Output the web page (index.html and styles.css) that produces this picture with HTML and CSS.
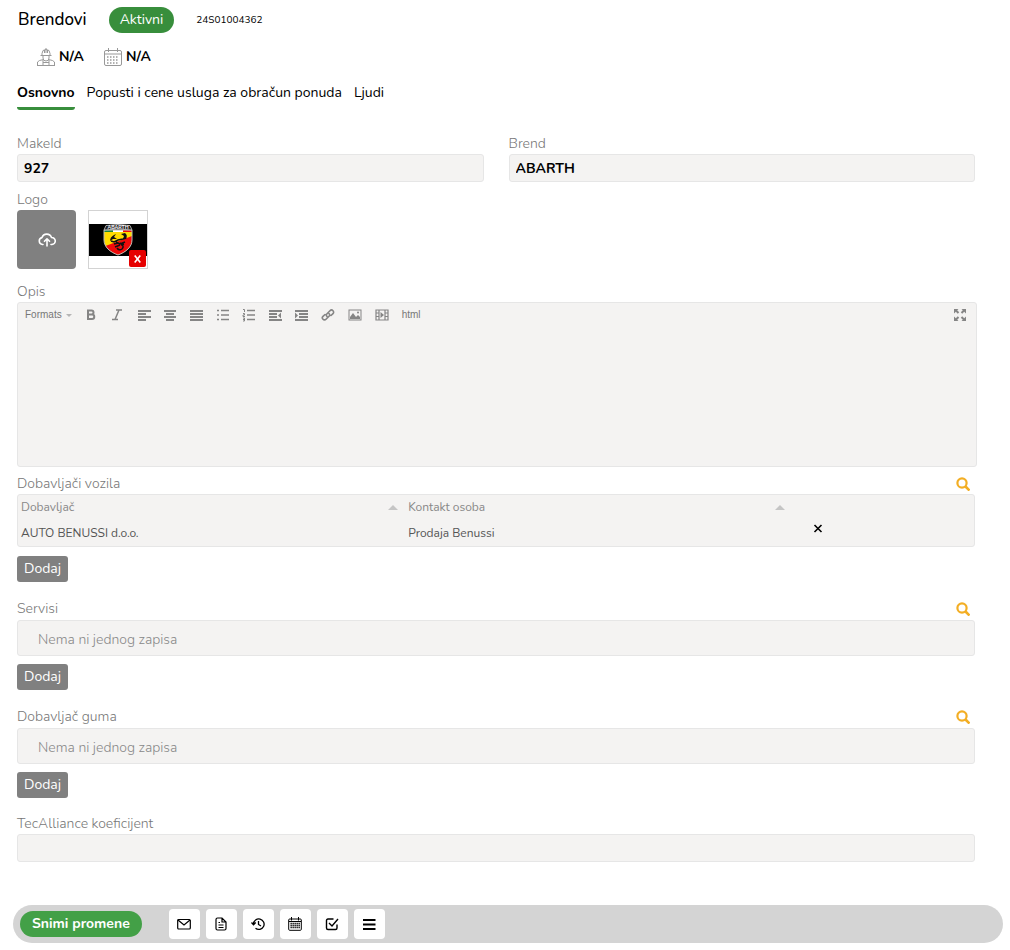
FILE: index.html
```html
<!DOCTYPE html>
<html lang="sr-Latn">
<head>
  <meta charset="utf-8">
  <title>Brendovi</title>
  <link rel="stylesheet" href="styles.css">
</head>
<body>
<header class="page-header">
  <div class="title-row">
    <h1>Brendovi</h1>
    <span class="status">Aktivni</span>
    <span class="code">24S01004362</span>
  </div>
  <div class="meta-row">
    <span class="meta-item">
      <svg width="18" height="18" viewBox="0 0 18 18" fill="none" stroke="#999">
        <path d="M3.500 7.500h11M5 7V5.500a4 4 0 0 1 8 0V7M9 0v5M7.500 2v3M10.500 2v3M6 8v2a3 3 0 0 0 6 0V8M.5 17v-3l2-1.500 4-1M17.500 17v-3l-2-1.500-4-1M0 17.500h18M6 12v5M12 12v5M6 14.500h6"/>
      </svg>
      N/A
    </span>
    <span class="meta-item">
      <svg width="18" height="18" viewBox="0 0 18 18" fill="none" stroke="#999">
        <rect x=".5" y="2.500" width="17" height="15" rx="1.500"/>
        <path d="M.5 6h17M4.500 0v4M13.500 0v4"/>
        <path d="M3 9h12M3 12h12M3 15h12" stroke-width="1.500" stroke-dasharray="1.500 1.500"/>
      </svg>
      N/A
    </span>
  </div>
  <nav class="tabs">
    <a href="#osnovno" class="active">Osnovno</a>
    <a href="#popusti">Popusti i cene usluga za obračun ponuda</a>
    <a href="#ljudi">Ljudi</a>
  </nav>
</header>

<main class="form" id="osnovno">
  <div class="columns">
    <div class="field">
      <label for="makeId">MakeId</label>
      <input type="text" id="makeId" value="927">
    </div>
    <div class="field">
      <label for="brend">Brend</label>
      <input type="text" id="brend" value="ABARTH">
    </div>
  </div>

  <div class="field logo-field">
    <span class="label">Logo</span>
    <div class="logos">
      <button class="upload" aria-label="Dodaj logo">
        <svg width="18" height="14" viewBox="0 0 18 14" fill="none" stroke="#fff" stroke-width="1.600" stroke-linecap="round" stroke-linejoin="round">
          <path d="M5 11.500H4.500A3.500 3.500 0 0 1 4 4.600 5 5 0 0 1 13.500 4.500a3.500 3.500 0 0 1 .5 7H13M9 13V6M6.500 8.300 9 5.800l2.500 2.500"/>
        </svg>
      </button>
      <div class="thumb">
        <svg class="thumb-image" viewBox="0 0 58 32">
          <rect width="58" height="32" fill="#000"/>
          <path d="M15 6h28v10c0 7-6 12-14 15-8-3-14-8-14-15z" fill="#ffdc00"/>
          <path d="M43 12v4c0 7-6 12-14 15-6-2-10-5-12.500-9z" fill="#f00a0a"/>
          <path d="M15 6h9v2h-9z" fill="#16833a"/>
          <path d="M24 6h10v2H24z" fill="#fff"/>
          <path d="M34 6h9v2h-9z" fill="#f00a0a"/>
          <path d="M15 6h28v10c0 7-6 12-14 15-8-3-14-8-14-15z" fill="none" stroke="#bbb"/>
          <path d="M15 6 17 1.500q12-2 24 0L43 6q-14-2-28 0z" fill="#222" stroke="#ccc" stroke-width=".8"/>
          <text x="29" y="5" class="badge-text">ABARTH</text>
          <path d="M21 17q0-4 4-6l2-1-2 3 3 2-4 0zM32 10l4-1q3 2 1 6l-3 0 1-3z" fill="#111"/>
          <path d="M22 17l3 1 4-2 5-1 3-1M27 18l4 2 5-2M25 20l4-1M26 23l5-2M35 20l-3 1M31 19q5 3 2 6-3 2-5-1" fill="none" stroke="#111" stroke-width="1.500"/>
        </svg>
        <button class="remove-logo" aria-label="Ukloni logo">
          <svg width="7" height="8" viewBox="0 0 7 8" stroke="#fff" stroke-width="1.600"><path d="M.7.5l5.600 7M6.300.5l-5.600 7"/></svg>
        </button>
      </div>
    </div>
  </div>

  <div class="field editor-field">
    <label for="opis">Opis</label>
    <div class="editor">
      <div class="toolbar">
        <button class="formats">Formats <span class="caret"></span></button>
        <button aria-label="Bold"><svg width="14" height="14" viewBox="0 0 14 14" fill="none" stroke="#858585" stroke-width="2"><path d="M4 2.500h3.500a2 2 0 0 1 0 4H4zM4 6.500h4a2.200 2.200 0 0 1 0 4.500H4z"/></svg></button>
        <button aria-label="Italic"><svg width="14" height="14" viewBox="0 0 14 14" fill="none" stroke="#858585" stroke-width="1.500"><path d="M6 2h6M2 11.500h6M9 2l-4 9.500"/></svg></button>
        <button class="group" aria-label="Align left"><svg width="14" height="14" viewBox="0 0 14 14" fill="none" stroke="#858585" stroke-width="2"><path d="M1 3h13M1 6h8M1 9h13M1 12h8"/></svg></button>
        <button aria-label="Align center"><svg width="14" height="14" viewBox="0 0 14 14" fill="none" stroke="#858585" stroke-width="2"><path d="M1 3h12M3 6h8M1 9h12M3 12h8"/></svg></button>
        <button aria-label="Justify"><svg width="14" height="14" viewBox="0 0 14 14" fill="none" stroke="#858585" stroke-width="2"><path d="M1 3h13M1 6h13M1 9h13M1 12h13"/></svg></button>
        <button class="group" aria-label="Bullet list"><svg width="14" height="14" viewBox="0 0 14 14" fill="none" stroke="#858585" stroke-width="1.600"><path d="M1 2.500h2M5 2.500h8M1 7h2M5 7h8M1 11.500h2M5 11.500h8"/></svg></button>
        <button aria-label="Numbered list"><svg width="14" height="14" viewBox="0 0 14 14" fill="none" stroke="#858585" stroke-width="1.600"><path d="M5 2.500h8M5 7h8M5 11.500h8"/><path d="M1 1.500h1.500V4M1 5.500h1.500v1.500H1V8.500h2M1 10h1.500v3H1M1 11.500h1.500" stroke-width="1"/></svg></button>
        <button aria-label="Outdent"><svg width="14" height="14" viewBox="0 0 14 14" fill="none" stroke="#858585" stroke-width="2"><path d="M1 3h13M1 6h8M1 9h8M1 12h13"/><path d="M13 4.500v6l-3-3z" fill="#858585" stroke="none"/></svg></button>
        <button aria-label="Indent"><svg width="14" height="14" viewBox="0 0 14 14" fill="none" stroke="#858585" stroke-width="2"><path d="M1 3h13M5 6h9M5 9h9M1 12h13"/><path d="M1 4.500v6l3-3z" fill="#858585" stroke="none"/></svg></button>
        <button class="group" aria-label="Link"><svg width="14" height="14" viewBox="0 0 14 14" fill="none" stroke="#858585" stroke-width="1.600" stroke-linecap="round"><path d="M6 8.500a2 2 0 0 1 0-2.800l3-3a2 2 0 0 1 3 3L10 7.500M8 5.500a2 2 0 0 1 0 2.800l-3 3a2 2 0 0 1-3-3L4 6.500"/></svg></button>
        <button class="group" aria-label="Image"><svg width="14" height="14" viewBox="0 0 14 14"><rect x="1" y="2" width="12" height="10" fill="none" stroke="#858585"/><path d="M2 11V9l3-4 3 4 2-2 2 2v2z" fill="#858585"/><circle cx="10" cy="4.500" r="1" fill="#858585"/></svg></button>
        <button class="group" aria-label="Video"><svg width="14" height="14" viewBox="0 0 14 14"><path d="M1 2h12v10H1zM4 2v10M10 2v10M1 5h3M1 8.500h3M10 5h3M10 8.500h3" fill="none" stroke="#858585" stroke-width="1.200"/><path d="M5.500 4v6L9 7z" fill="#858585"/></svg></button>
        <button class="group">html</button>
        <button class="fullscreen" aria-label="Fullscreen"><svg width="14" height="14" viewBox="0 0 14 14"><path d="M1 1h4.500L4.200 2.300l2 2-1.400 1.500-2-2L1 5.500zM13 1v4.500l-1.800-1.700-2 2-1.400-1.500 2-2L8.500 1zM1 13V8.500l1.800 1.700 2-2 1.400 1.500-2 2L5.500 13zM13 13H8.500l1.300-1.300-2-2 1.400-1.500 2 2L13 8.500z" fill="#858585"/></svg></button>
      </div>
      <textarea id="opis"></textarea>
    </div>
  </div>

  <section class="records suppliers">
    <div class="records-header">
      <h2>Dobavljači vozila</h2>
      <button class="search" aria-label="Pretraga"><svg width="14" height="14" viewBox="0 0 14 14" fill="none" stroke="#f3ae24"><circle cx="6" cy="6" r="4.600" stroke-width="2.200"/><path d="M9.500 9.500l4 4" stroke-width="2.600"/></svg></button>
    </div>
    <div class="panel">
      <table>
        <thead>
          <tr>
            <th><div class="sortable">Dobavljač <span class="sort"></span></div></th>
            <th><div class="sortable">Kontakt osoba <span class="sort"></span></div></th>
            <th></th>
          </tr>
        </thead>
        <tbody>
          <tr>
            <td>AUTO BENUSSI d.o.o.</td>
            <td>Prodaja Benussi</td>
            <td><button class="remove-row" aria-label="Ukloni"><svg width="10" height="9" viewBox="0 0 10 9" stroke="#000" stroke-width="1.600"><path d="M1.500 1l7 7M8.500 1l-7 7"/></svg></button></td>
          </tr>
        </tbody>
      </table>
    </div>
    <button class="add">Dodaj</button>
  </section>

  <section class="records">
    <div class="records-header">
      <h2>Servisi</h2>
      <button class="search" aria-label="Pretraga"><svg width="14" height="14" viewBox="0 0 14 14" fill="none" stroke="#f3ae24"><circle cx="6" cy="6" r="4.600" stroke-width="2.200"/><path d="M9.500 9.500l4 4" stroke-width="2.600"/></svg></button>
    </div>
    <div class="panel empty">Nema ni jednog zapisa</div>
    <button class="add">Dodaj</button>
  </section>

  <section class="records">
    <div class="records-header">
      <h2>Dobavljač guma</h2>
      <button class="search" aria-label="Pretraga"><svg width="14" height="14" viewBox="0 0 14 14" fill="none" stroke="#f3ae24"><circle cx="6" cy="6" r="4.600" stroke-width="2.200"/><path d="M9.500 9.500l4 4" stroke-width="2.600"/></svg></button>
    </div>
    <div class="panel empty">Nema ni jednog zapisa</div>
    <button class="add">Dodaj</button>
  </section>

  <div class="field">
    <label for="koeficijent">TecAlliance koeficijent</label>
    <input type="text" id="koeficijent">
  </div>
</main>

<footer class="actions">
  <button class="save">Snimi promene</button>
  <button class="action" aria-label="Poruka"><svg width="14" height="14" viewBox="0 0 14 14" fill="none" stroke="#000" stroke-width="1.200"><rect x=".7" y="2.500" width="12.600" height="9.500" rx="1"/><path d="M1 3l6 5 6-5"/></svg></button>
  <button class="action" aria-label="Dokument"><svg width="14" height="14" viewBox="0 0 14 14" fill="none" stroke="#000" stroke-width="1.200"><path d="M8 1H3.500Q2 1 2 2.500v9Q2 13 3.500 13h7q1.500 0 1.500-1.500V5zM8 1v4h4M4.500 5.500H6M4.500 8h5M4.500 10.500h5"/></svg></button>
  <button class="action" aria-label="Istorija"><svg width="14" height="14" viewBox="0 0 14 14" fill="none" stroke="#000" stroke-width="1.300"><path d="M2.500 7A5.300 5.300 0 1 1 4.500 11.300M.5 5.500l2 2.300 2.200-2.300M7.500 4v3.500l2.500 1.500"/></svg></button>
  <button class="action" aria-label="Kalendar"><svg width="14" height="14" viewBox="0 0 14 14" fill="none" stroke="#000"><rect x=".7" y="2" width="12.600" height="11.300" rx="1"/><path d="M1 4.500h12M3.500 0v3.500M10.500 0v3.500"/><path d="M2.500 6.500h10M2.500 8.500h10M2.500 10.500h10" stroke-width="1.500" stroke-dasharray="1.300 .7"/></svg></button>
  <button class="action" aria-label="Zadaci"><svg width="14" height="14" viewBox="0 0 14 14" fill="none" stroke="#000" stroke-width="1.400"><path d="M8.500 2H3Q1.500 2 1.500 3.500v7.500Q1.500 12.500 3 12.500h7.500Q12 12.500 12 11V7.500M4 6l3 3 6-7"/></svg></button>
  <button class="action" aria-label="Meni"><svg width="14" height="14" viewBox="0 0 14 14" stroke="#000" stroke-width="1.800"><path d="M1 3h12.500M1 7.500h12.500M1 12h12.500"/></svg></button>
</footer>
</body>
</html>
```
FILE: styles.css
```css
* {
  box-sizing: border-box;
}

body {
  margin: 0;
  color: #000;
  font-family: Nunito, Lato, sans-serif;
  font-size: 14px;
  line-height: 20px;
}

button,
input,
textarea {
  font: inherit;
}

button {
  display: flex;
  align-items: center;
  justify-content: center;
  padding: 0;
  border: 0;
  background: none;
  cursor: pointer;
}

svg {
  display: block;
  flex: none;
}

.page-header {
  padding: 7px 17px 0;
}

.title-row {
  display: flex;
  align-items: center;
  gap: 22px;
}

h1 {
  margin: 0 0 0 1px;
  font-size: 17px;
  font-weight: 500;
}

.status {
  padding: 3px 11px;
  border-radius: 13px;
  background: #388e3c;
  color: #fff;
}

.code {
  font-size: 10px;
}

.meta-row {
  display: flex;
  gap: 20px;
  padding: 13px 20px 0;
}

.meta-item {
  display: flex;
  align-items: center;
  gap: 4px;
  line-height: 22px;
  font-weight: 700;
}

.tabs {
  display: flex;
  gap: 12px;
  padding-top: 15px;
}

.tabs a {
  padding-bottom: 4px;
  border-bottom: 3px solid transparent;
  border-radius: 0 0 3px 3px;
  color: #000;
  text-decoration: none;
}

.tabs .active {
  border-color: #388e3c;
  font-weight: bold;
}

.form {
  padding: 24px 35px 0 17px;
}

.columns {
  display: grid;
  grid-template-columns: 1fr 1fr;
  gap: 25px;
}

.field label,
.label,
.records h2 {
  display: block;
  margin: 0;
  color: #777;
  font-size: 14px;
  font-weight: 300;
}

.field input {
  display: block;
  width: 100%;
  height: 28px;
  padding: 0 6px;
  border: 1px solid #e6e6e6;
  border-radius: 3px;
  background: #f4f3f2;
  font-weight: bold;
}

.logo-field {
  margin-top: 8px;
}

.logos {
  display: flex;
  gap: 12px;
}

.upload {
  width: 59px;
  height: 59px;
  border-radius: 4px;
  background: #808080;
}

.thumb {
  position: relative;
  display: flex;
  align-items: center;
  width: 60px;
  height: 59px;
  border: 1px solid #d3d3d3;
}

.thumb-image {
  width: 100%;
}

.badge-text {
  fill: #fff;
  font-size: 5px;
  font-weight: bold;
  text-anchor: middle;
}

.remove-logo {
  position: absolute;
  right: 1px;
  bottom: 1px;
  width: 17px;
  height: 17px;
  border-radius: 2px;
  background: #e60000;
}

.editor-field {
  margin: 13px -2px 0 0;
}

.editor {
  border: 1px solid #e6e6e6;
  border-radius: 3px;
  background: #f4f3f2;
}

.toolbar {
  display: flex;
  align-items: center;
  gap: 12px;
  height: 24px;
  padding: 0 9px 0 7px;
}

.toolbar button {
  color: #777;
  font-family: "Liberation Sans", Arial, sans-serif;
  font-size: 10px;
}

.toolbar .formats {
  gap: 4px;
}

.toolbar .group {
  margin-left: 1px;
}

.caret {
  border: 3px solid transparent;
  border-top-color: #b5b5b5;
  border-bottom: 0;
}

.toolbar .fullscreen {
  margin-left: auto;
}

.editor textarea {
  display: block;
  width: 100%;
  height: 139px;
  border: 0;
  background: transparent;
  resize: none;
}

.records {
  margin-bottom: 16px;
}

.suppliers {
  margin-top: 7px;
}

.records-header {
  display: flex;
  align-items: center;
  justify-content: space-between;
  height: 22px;
  padding-right: 5px;
}

.suppliers .records-header {
  height: 20px;
}

.panel {
  border: 1px solid #e6e6e6;
  border-radius: 3px;
  background: #f4f3f2;
}

.empty {
  padding: 9px 20px 5px;
  color: #888;
  font-weight: 300;
}

table {
  width: 100%;
  border-collapse: collapse;
  table-layout: fixed;
  font-size: 12px;
}

th,
td {
  height: 24px;
  padding: 0 7px 0 3px;
  text-align: left;
}

tbody td {
  height: 27px;
  color: #555;
}

th:last-child {
  width: 19%;
}

th {
  color: #888;
  font-weight: 400;
}

.sortable {
  display: flex;
  align-items: center;
  justify-content: space-between;
}

.sort {
  border: 5px solid transparent;
  border-top: 0;
  border-bottom-color: #c5c5c5;
}

.remove-row {
  margin: 0 0 8px 18px;
}

.add {
  margin-top: 8px;
  padding: 3px 7px;
  border-radius: 3px;
  background: #808080;
  color: #fff;
}

.suppliers .add {
  margin-top: 9px;
}

.actions {
  display: flex;
  align-items: center;
  gap: 6px;
  margin: 43px 7px 6px 13px;
  padding: 4px 7px;
  border-radius: 19px;
  background: #d4d4d4;
}

.save {
  margin-right: 21px;
  padding: 3px 12px;
  border-radius: 14px;
  background: #43a047;
  color: #fff;
  font-weight: bold;
}

.action {
  width: 31px;
  height: 30px;
  border-radius: 4px;
  background: #fff;
}
```
